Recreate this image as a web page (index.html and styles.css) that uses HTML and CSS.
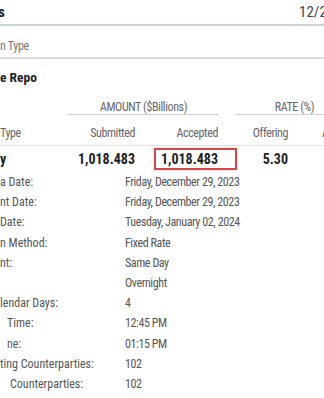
FILE: index.html
```html
<!DOCTYPE html>
<html>
<head>
<meta charset="utf-8">
<link rel="stylesheet" href="styles.css">
</head>
<body>
<div class="page">
  <div class="top">
    <span class="title">s</span>
    <span class="date">12/29/2023</span>
  </div>
  <div class="subtype">n Type</div>
  <div class="section">e Repo</div>

  <div class="row group">
    <span class="gap"></span>
    <span class="grp amount">AMOUNT ($Billions)</span>
    <span class="gap"></span>
    <span class="grp rate">RATE (%)</span>
  </div>
  <div class="row heads">
    <span class="left">Type</span>
    <span class="num">Submitted</span>
    <span class="num">Accepted</span>
    <span class="gap"></span>
    <span class="num">Offering</span>
    <span class="lastcol">A</span>
  </div>
  <div class="row data">
    <span class="left">y</span>
    <span class="num">1,018.483</span>
    <span class="num"><span class="mark">1,018.483</span></span>
    <span class="gap"></span>
    <span class="num">5.30</span>
    <span class="lastcol"></span>
  </div>

  <div class="details">
    <span class="lbl">a Date:</span><span class="val">Friday, December 29, 2023</span>
    <span class="lbl">nt Date:</span><span class="val">Friday, December 29, 2023</span>
    <span class="lbl">Date:</span><span class="val">Tuesday, January 02, 2024</span>
    <span class="lbl">n Method:</span><span class="val">Fixed Rate</span>
    <span class="lbl">nt:</span><span class="val">Same Day</span>
    <span class="lbl"></span><span class="val">Overnight</span>
    <span class="lbl">lendar Days:</span><span class="val">4</span>
    <span class="lbl ind">Time:</span><span class="val">12:45 PM</span>
    <span class="lbl ind">ne:</span><span class="val">01:15 PM</span>
    <span class="lbl">ting Counterparties:</span><span class="val">102</span>
    <span class="lbl ind2">Counterparties:</span><span class="val">102</span>
  </div>
</div>
</body>
</html>
```
FILE: styles.css
```css
html, body {
  margin: 0;
  padding: 0;
  background: #fff;
}
.page {
  width: 324px;
  height: 398px;
  overflow: hidden;
  font-family: "Roboto Condensed", Roboto, sans-serif;
  font-stretch: condensed;
  color: #555;
  font-size: 12px;
}
.top {
  display: flex;
  justify-content: space-between;
  align-items: center;
  height: 24px;
  border-bottom: 2px solid #c4d4df;
}
.title {
  margin-left: -2px;
  font-weight: 700;
  font-size: 15px;
  color: #1e1e1e;
}
.date {
  width: 25px;
  white-space: nowrap;
  font-size: 15px;
  color: #444;
}
.subtype {
  padding: 13px 0 4px;
  line-height: 14px;
  font-size: 12px;
  letter-spacing: -0.3px;
  color: #777;
  border-bottom: 2px solid #dcdcdc;
}
.section {
  padding-top: 9px;
  line-height: 18px;
  font-size: 13.5px;
  font-weight: 700;
  color: #1e1e1e;
}
.row {
  display: grid;
  grid-template-columns: 67px 68px 83px 17px 53px 65px;
  white-space: nowrap;
}
.group {
  padding-top: 14px;
  line-height: 14px;
  letter-spacing: -0.4px;
  color: #666;
}
.grp {
  grid-column: span 2;
  text-align: center;
  padding-bottom: 0;
  border-bottom: 1px solid #cfcfcf;
}
.amount {
  padding-left: 2px;
}
.rate {
  padding-left: 1px;
}
.heads {
  padding: 11px 0 5px;
  line-height: 14px;
  letter-spacing: -0.4px;
  color: #666;
  border-bottom: 1px solid #e2e2e2;
  width: 324px;
}
.left {
  text-align: left;
}
.num {
  text-align: right;
}
.lastcol {
  padding-left: 34px;
}
.data {
  padding: 4px 0 4px;
  line-height: 18px;
  font-size: 14px;
  font-weight: 700;
  letter-spacing: 0;
  color: #1e1e1e;
}
.mark {
  position: relative;
  display: inline-block;
}
.mark::after {
  content: "";
  position: absolute;
  left: -7px;
  right: -19px;
  top: -2px;
  bottom: -2px;
  border: 2px solid #d2474a;
  box-shadow: 0 0 2px rgba(210, 71, 74, 0.35);
}
.details {
  display: grid;
  grid-template-columns: 125px 1fr;
  grid-auto-rows: 20.2px;
  align-items: center;
  white-space: nowrap;
  color: #555;
}
.lbl {
  font-size: 12px;
}
.val {
  font-size: 12px;
  letter-spacing: -0.4px;
}
.ind {
  padding-left: 7px;
}
.ind2 {
  padding-left: 10px;
}
```
